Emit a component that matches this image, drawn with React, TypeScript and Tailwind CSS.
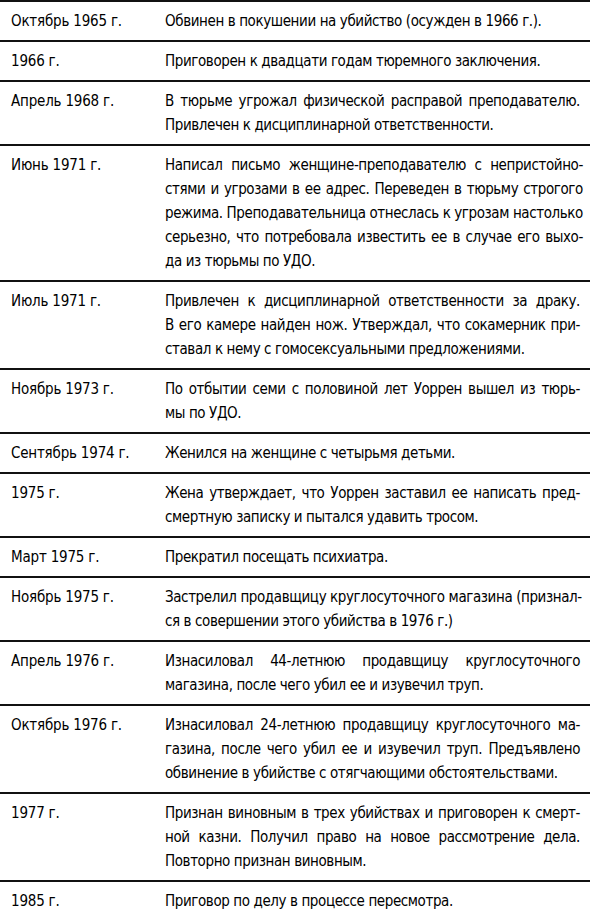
import React from "react";

type Row = { date: string; lines: string[] };

const rows: Row[] = [
  { date: "Октябрь 1965 г.", lines: ["Обвинен в покушении на убийство (осужден в 1966 г.)."] },
  { date: "1966 г.", lines: ["Приговорен к двадцати годам тюремного заключения."] },
  {
    date: "Апрель 1968 г.",
    lines: ["В тюрьме угрожал физической расправой преподавателю.", "Привлечен к дисциплинарной ответственности."],
  },
  {
    date: "Июнь 1971 г.",
    lines: [
      "Написал письмо женщине-преподавателю с непристойно-",
      "стями и угрозами в ее адрес. Переведен в тюрьму строгого",
      "режима. Преподавательница отнеслась к угрозам настолько",
      "серьезно, что потребовала известить ее в случае его выхо-",
      "да из тюрьмы по УДО.",
    ],
  },
  {
    date: "Июль 1971 г.",
    lines: [
      "Привлечен к дисциплинарной ответственности за драку.",
      "В его камере найден нож. Утверждал, что сокамерник при-",
      "ставал к нему с гомосексуальными предложениями.",
    ],
  },
  {
    date: "Ноябрь 1973 г.",
    lines: ["По отбытии семи с половиной лет Уоррен вышел из тюрь-", "мы по УДО."],
  },
  { date: "Сентябрь 1974 г.", lines: ["Женился на женщине с четырьмя детьми."] },
  {
    date: "1975 г.",
    lines: ["Жена утверждает, что Уоррен заставил ее написать пред-", "смертную записку и пытался удавить тросом."],
  },
  { date: "Март 1975 г.", lines: ["Прекратил посещать психиатра."] },
  {
    date: "Ноябрь 1975 г.",
    lines: ["Застрелил продавщицу круглосуточного магазина (признал-", "ся в совершении этого убийства в 1976 г.)"],
  },
  {
    date: "Апрель 1976 г.",
    lines: ["Изнасиловал 44-летнюю продавщицу круглосуточного", "магазина, после чего убил ее и изувечил труп."],
  },
  {
    date: "Октябрь 1976 г.",
    lines: [
      "Изнасиловал 24-летнюю продавщицу круглосуточного ма-",
      "газина, после чего убил ее и изувечил труп. Предъявлено",
      "обвинение в убийстве с отягчающими обстоятельствами.",
    ],
  },
  {
    date: "1977 г.",
    lines: [
      "Признан виновным в трех убийствах и приговорен к смерт-",
      "ной казни. Получил право на новое рассмотрение дела.",
      "Повторно признан виновным.",
    ],
  },
  { date: "1985 г.", lines: ["Приговор по делу в процессе пересмотра."] },
];

const App = () => {
  return (
    <div className="w-[590px] bg-white text-black font-['DejaVu_Sans_Condensed','DejaVu_Sans',sans-serif] text-[15px] leading-6 tracking-[-0.4px]">
      {rows.map((row, i) => (
        <div
          key={i}
          className={
            "flex border-t-2 border-[#111] py-[7px]" + (i === rows.length - 1 ? " border-b-2" : "")
          }
        >
          {/* дата */}
          <div className="w-[165px] shrink-0 pl-[11px] whitespace-nowrap tracking-[-0.2px]">{row.date}</div>

          {/* событие, строки как в оригинале */}
          <div className="flex-1 pr-[10px]">
            {row.lines.map((line, j) =>
              j < row.lines.length - 1 ? (
                <div key={j} className="text-justify [text-align-last:justify] whitespace-nowrap">
                  {line}
                </div>
              ) : (
                <div key={j} className="whitespace-nowrap">
                  {line}
                </div>
              )
            )}
          </div>
        </div>
      ))}
    </div>
  );
};

export default App;
